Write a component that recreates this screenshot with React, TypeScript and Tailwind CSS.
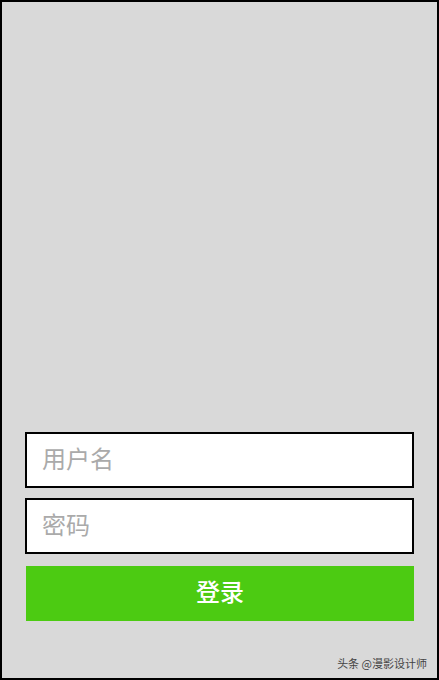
export default function App() {
  return (
    <div
      className="flex h-[680px] w-[439px] flex-col justify-end border-2 border-black bg-[#d9d9d9]"
      style={{ fontFamily: '"Noto Sans CJK SC", "Noto Sans", sans-serif' }}
    >
      <form className="flex flex-col px-[23px]" onSubmit={(e) => e.preventDefault()}>
        <input
          type="text"
          placeholder="用户名"
          className="h-[56px] w-full border-2 border-black bg-white px-[15px] pb-[5px] text-[24px] text-[#333] outline-none placeholder:text-[#aaaaaa]"
        />
        <input
          type="password"
          placeholder="密码"
          className="mt-[10px] h-[56px] w-full border-2 border-black bg-white px-[15px] pb-[5px] text-[24px] text-[#333] outline-none placeholder:text-[#aaaaaa]"
        />
        <button
          type="submit"
          className="ml-[1px] mt-[12px] h-[55px] bg-[#4ccb12] pb-[5px] text-[24px] font-medium text-white"
        >
          登录
        </button>
      </form>
      <div className="mt-[34px] mb-[7px] pr-[10px] text-right text-[11px] leading-[16px] text-[#444]">
        头条 @漫影设计师
      </div>
    </div>
  );
}
